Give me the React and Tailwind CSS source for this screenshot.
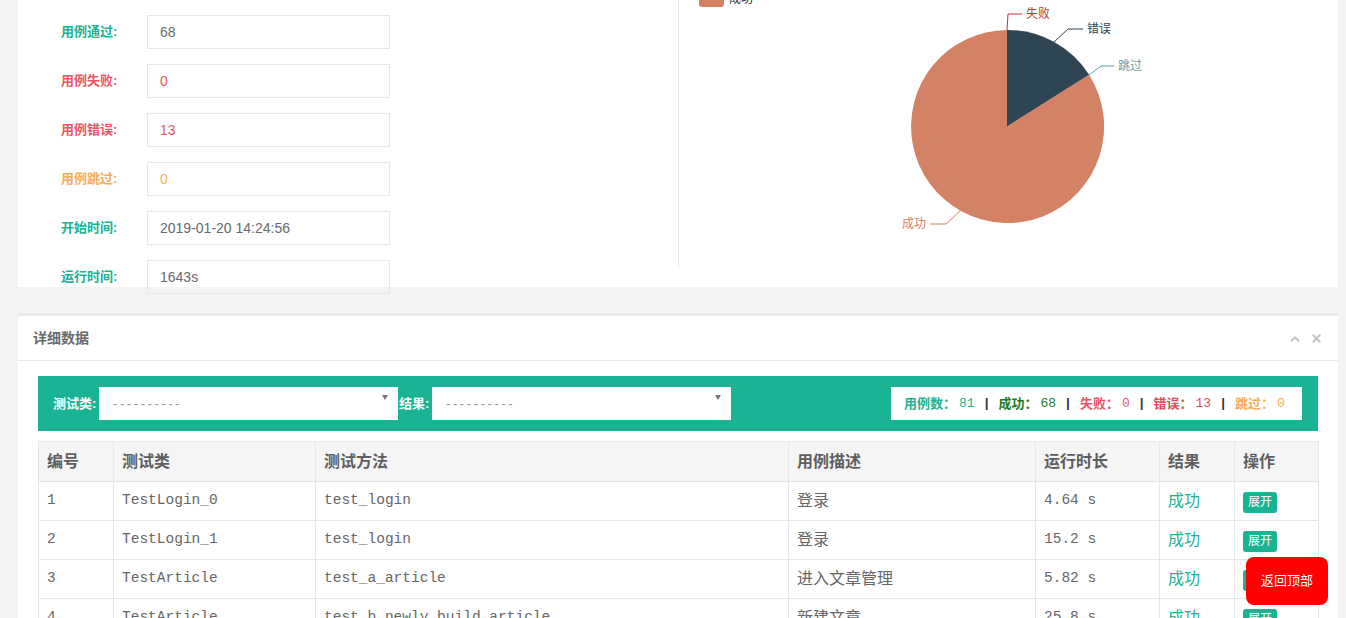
import React from "react";
import { ChevronUp, X } from "lucide-react";

const sans = { fontFamily: '"Liberation Sans", "Noto Sans CJK SC", sans-serif' };
const mono = { fontFamily: '"Liberation Mono", "Noto Sans CJK SC", monospace' };

const fields = [
    { label: "用例通过:", value: "68", labelColor: "text-[#1ab394]", valueColor: "text-[#676a6c]" },
    { label: "用例失败:", value: "0", labelColor: "text-[#ed5565]", valueColor: "text-[#ed5565]" },
    { label: "用例错误:", value: "13", labelColor: "text-[#ed5565]", valueColor: "text-[#ed5565]" },
    { label: "用例跳过:", value: "0", labelColor: "text-[#f8ac59]", valueColor: "text-[#f8ac59]" },
    { label: "开始时间:", value: "2019-01-20 14:24:56", labelColor: "text-[#1ab394]", valueColor: "text-[#676a6c]" },
    { label: "运行时间:", value: "1643s", labelColor: "text-[#1ab394]", valueColor: "text-[#676a6c]" },
];

const stats = [
    { label: "用例数：", value: "81", color: "text-[#1ab394]" },
    { label: "成功：", value: "68", color: "text-[#1e7b1e]" },
    { label: "失败：", value: "0", color: "text-[#ed5565]" },
    { label: "错误：", value: "13", color: "text-[#e04a5a]" },
    { label: "跳过：", value: "0", color: "text-[#f8ac59]" },
];

const rows = [
    ["1", "TestLogin_0", "test_login", "登录", "4.64 s"],
    ["2", "TestLogin_1", "test_login", "登录", "15.2 s"],
    ["3", "TestArticle", "test_a_article", "进入文章管理", "5.82 s"],
    ["4", "TestArticle", "test_b_newly_build_article", "新建文章", "25.8 s"],
    ["5", "TestArticle", "test_c_edit_article", "编辑文章", "12.1 s"],
];

const PieChart = () => (
    <svg viewBox="678 0 660 268" width="660" height="268" className="block" style={{ fontFamily: '"Noto Sans CJK SC", sans-serif' }}>
        {/* legend, mostly scrolled out of view */}
        <rect x="698" y="-7" width="25" height="14" rx="3" fill="#d48265" />
        <text x="728" y="0" fontSize="12" fill="#333" dominantBaseline="middle">成功</text>

        <path d="M1006 126.5 L1088.07 74.79 A96.5 96.5 0 1 1 1006 30 Z" fill="#d48265" />
        <path d="M1006 126.5 L1006 30 A96.5 96.5 0 0 1 1088.07 74.79 Z" fill="#2f4554" />

        <polyline points="1006,30 1007,14 1021,14" fill="none" stroke="#c23531" strokeWidth="1" />
        <text x="1025" y="15" fontSize="12" fill="#c23531" dominantBaseline="middle">失败</text>

        <polyline points="1053,42 1067,29 1082,29" fill="none" stroke="#2f4554" strokeWidth="1" />
        <text x="1086" y="30" fontSize="12" fill="#2f4554" dominantBaseline="middle">错误</text>

        <polyline points="1088,75 1100,66 1113,66" fill="none" stroke="#61a0a8" strokeWidth="1" />
        <text x="1117" y="67" fontSize="12" fill="#61a0a8" dominantBaseline="middle">跳过</text>

        <polyline points="959,211 945,224 929,224" fill="none" stroke="#d48265" strokeWidth="1" />
        <text x="925" y="225" fontSize="12" fill="#d48265" textAnchor="end" dominantBaseline="middle">成功</text>
    </svg>
);

const Select = ({ width }) => (
    <div className={`relative shrink-0 h-[33px] ${width} bg-white flex items-center pl-[14px] text-[13px] tracking-[2.6px] text-[#999]`}>
        ----------
        <span className="absolute right-[10px] top-[8px] w-0 h-0 border-l-[3px] border-r-[3px] border-t-[5px] border-l-transparent border-r-transparent border-t-[#777]"></span>
    </div>
);

export default function App() {
    return (
        <div className="h-[618px] w-[1346px] overflow-hidden bg-[#f3f3f4] pl-[18px] pr-[8px]" style={sans}>
            {/* top summary panel */}
            <div className="h-[287px] bg-white flex">
                <div className="w-[660px] flex flex-col gap-[15px] pt-[15px] pl-[43px]">
                    {fields.map((f) => (
                        <div key={f.label} className="flex items-center h-[34px]">
                            <label className={`w-[86px] shrink-0 whitespace-nowrap text-[13px] font-bold ${f.labelColor}`}>{f.label}</label>
                            <div className={`w-[243px] h-[34px] border border-[#e5e6e7] flex items-center px-[12px] text-[14px] ${f.valueColor}`}>
                                {f.value}
                            </div>
                        </div>
                    ))}
                </div>
                <div className="w-[660px] h-[268px] border-l border-[#e7eaec] overflow-hidden">
                    <PieChart />
                </div>
            </div>

            {/* detail panel */}
            <div className="mt-[26px] bg-white border-t-[3px] border-[#e7eaec]">
                <div className="h-[45px] border-b border-[#e7eaec] flex items-center justify-between px-[15px] pt-[1px]">
                    <h5 className="text-[14px] font-semibold text-[#676a6c]">详细数据</h5>
                    <div className="flex items-center gap-[8px] text-[#c4c4c4]">
                        <ChevronUp size={14} strokeWidth={3.5} />
                        <X size={13} strokeWidth={3.5} />
                    </div>
                </div>

                <div className="px-[20px] pt-[15px] pb-[20px]">
                    <div className="h-[55px] bg-[#1ab394] flex items-center pl-[15px] pr-[16px] whitespace-nowrap">
                        <span className="shrink-0 text-[13px] font-bold text-white w-[46px]">测试类:</span>
                        <Select width="w-[299px]" />
                        <span className="shrink-0 text-[13px] font-bold text-white w-[34px] pl-[1px]">结果:</span>
                        <Select width="w-[299px]" />
                        <div className="ml-auto shrink-0 h-[33px] w-[411px] bg-white flex items-center pl-[13px] text-[13px] whitespace-nowrap">
                            {stats.map((s, i) => (
                                <React.Fragment key={s.label}>
                                    {i > 0 && <span className="shrink-0 mx-[8px] font-bold text-[#333]" style={mono}>|</span>}
                                    <span className={`shrink-0 font-bold ${s.color}`}>{s.label}</span>
                                    <span className={`shrink-0 ml-[3px] ${s.color}`} style={mono}>{s.value}</span>
                                </React.Fragment>
                            ))}
                        </div>
                    </div>

                    <table className="mt-[10px] w-[1280px] border-collapse table-fixed text-[16px] text-[#666]">
                        <colgroup>
                            <col className="w-[75px]" />
                            <col className="w-[202px]" />
                            <col className="w-[473px]" />
                            <col className="w-[247px]" />
                            <col className="w-[124px]" />
                            <col className="w-[75px]" />
                            <col className="w-[84px]" />
                        </colgroup>
                        <thead>
                            <tr className="h-[40px] bg-[#f5f5f6] text-left">
                                {["编号", "测试类", "测试方法", "用例描述", "运行时长", "结果", "操作"].map((h) => (
                                    <th key={h} className="border border-[#e7e7e7] px-[8px] font-semibold text-[#5e5e5e]">{h}</th>
                                ))}
                            </tr>
                        </thead>
                        <tbody>
                            {rows.map((r) => (
                                <tr key={r[0]} className="h-[39px]">
                                    <td className="border border-[#e7e7e7] px-[8px] text-[14.5px]" style={mono}>{r[0]}</td>
                                    <td className="border border-[#e7e7e7] px-[8px] text-[14.5px]" style={mono}>{r[1]}</td>
                                    <td className="border border-[#e7e7e7] px-[8px] text-[14.5px]" style={mono}>{r[2]}</td>
                                    <td className="border border-[#e7e7e7] px-[8px]">{r[3]}</td>
                                    <td className="border border-[#e7e7e7] px-[8px] text-[14.5px]" style={mono}>{r[4]}</td>
                                    <td className="border border-[#e7e7e7] px-[8px] text-[#1ab394]">成功</td>
                                    <td className="border border-[#e7e7e7] px-[8px]">
                                        <button className="h-[21px] px-[5px] rounded-[3px] bg-[#1ab394] text-white text-[12px] leading-[21px]">展开</button>
                                    </td>
                                </tr>
                            ))}
                        </tbody>
                    </table>
                </div>
            </div>

            <button className="fixed right-[18px] bottom-[13px] w-[82px] h-[48px] rounded-[8px] bg-[#ff0000] text-white text-[13px]">
                返回顶部
            </button>
        </div>
    );
}
